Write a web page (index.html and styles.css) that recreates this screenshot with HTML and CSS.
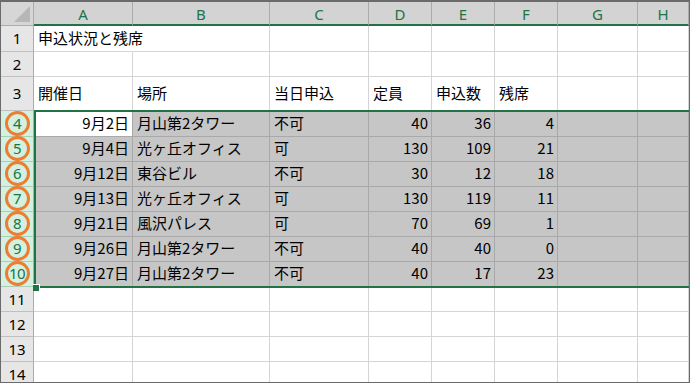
FILE: index.html
```html
<!DOCTYPE html>
<html lang="ja">
  <head>
    <meta charset="UTF-8" />
    <title>申込状況と残席</title>
    <link rel="stylesheet" href="styles.css">
  </head>
  <body>
    <div class="sheet">
      <div class="grid">
        <!-- 列見出し -->
        <div class="corner"><span class="tri"></span></div>
        <div class="hd">A</div><div class="hd">B</div><div class="hd">C</div><div class="hd">D</div>
        <div class="hd">E</div><div class="hd">F</div><div class="hd">G</div><div class="hd">H</div>

        <!-- 1〜3行目 -->
        <div class="rh">1</div>
        <div class="c spill">申込状況と残席</div><div class="c"></div><div class="c"></div><div class="c"></div>
        <div class="c"></div><div class="c"></div><div class="c"></div><div class="c"></div>

        <div class="rh">2</div>
        <div class="c"></div><div class="c"></div><div class="c"></div><div class="c"></div>
        <div class="c"></div><div class="c"></div><div class="c"></div><div class="c"></div>

        <div class="rh">3</div>
        <div class="c">開催日</div><div class="c">場所</div><div class="c">当日申込</div><div class="c">定員</div>
        <div class="c">申込数</div><div class="c">残席</div><div class="c"></div><div class="c"></div>

        <!-- 選択範囲 4〜10行目 -->
        <div class="rh on"><span class="ring">4</span></div>
        <div class="c num active">9月2日</div><div class="c sel">月山第2タワー</div><div class="c sel">不可</div><div class="c sel num">40</div>
        <div class="c sel num">36</div><div class="c sel num">4</div><div class="c sel"></div><div class="c sel"></div>

        <div class="rh on"><span class="ring">5</span></div>
        <div class="c sel num">9月4日</div><div class="c sel">光ヶ丘オフィス</div><div class="c sel">可</div><div class="c sel num">130</div>
        <div class="c sel num">109</div><div class="c sel num">21</div><div class="c sel"></div><div class="c sel"></div>

        <div class="rh on"><span class="ring">6</span></div>
        <div class="c sel num">9月12日</div><div class="c sel">東谷ビル</div><div class="c sel">不可</div><div class="c sel num">30</div>
        <div class="c sel num">12</div><div class="c sel num">18</div><div class="c sel"></div><div class="c sel"></div>

        <div class="rh on"><span class="ring">7</span></div>
        <div class="c sel num">9月13日</div><div class="c sel">光ヶ丘オフィス</div><div class="c sel">可</div><div class="c sel num">130</div>
        <div class="c sel num">119</div><div class="c sel num">11</div><div class="c sel"></div><div class="c sel"></div>

        <div class="rh on"><span class="ring">8</span></div>
        <div class="c sel num">9月21日</div><div class="c sel">風沢パレス</div><div class="c sel">可</div><div class="c sel num">70</div>
        <div class="c sel num">69</div><div class="c sel num">1</div><div class="c sel"></div><div class="c sel"></div>

        <div class="rh on"><span class="ring">9</span></div>
        <div class="c sel num">9月26日</div><div class="c sel">月山第2タワー</div><div class="c sel">不可</div><div class="c sel num">40</div>
        <div class="c sel num">40</div><div class="c sel num">0</div><div class="c sel"></div><div class="c sel"></div>

        <div class="rh on"><span class="ring">10</span></div>
        <div class="c sel num">9月27日</div><div class="c sel">月山第2タワー</div><div class="c sel">不可</div><div class="c sel num">40</div>
        <div class="c sel num">17</div><div class="c sel num">23</div><div class="c sel"></div><div class="c sel"></div>

        <!-- 11〜14行目 -->
        <div class="rh">11</div>
        <div class="c"></div><div class="c"></div><div class="c"></div><div class="c"></div>
        <div class="c"></div><div class="c"></div><div class="c"></div><div class="c"></div>

        <div class="rh">12</div>
        <div class="c"></div><div class="c"></div><div class="c"></div><div class="c"></div>
        <div class="c"></div><div class="c"></div><div class="c"></div><div class="c"></div>

        <div class="rh">13</div>
        <div class="c"></div><div class="c"></div><div class="c"></div><div class="c"></div>
        <div class="c"></div><div class="c"></div><div class="c"></div><div class="c"></div>

        <div class="rh">14</div>
        <div class="c"></div><div class="c"></div><div class="c"></div><div class="c"></div>
        <div class="c"></div><div class="c"></div><div class="c"></div><div class="c"></div>
      </div>

      <!-- 選択枠とフィルハンドル -->
      <div class="selection"><span class="handle"></span></div>
    </div>
  </body>
</html>
```

FILE: styles.css
```css
body {
  margin: 0;
  background: #ffffff;
  font-family: "Noto Sans CJK JP", "Noto Sans", sans-serif;
  font-size: 15px;
  color: #000000;
}

/* シート全体の枠 */
.sheet {
  position: relative;
  width: 690px;
  height: 383px;
  box-sizing: border-box;
  border: 1px solid #6b6b6b;
  border-top-width: 2px;
  overflow: hidden;
}

.grid {
  display: grid;
  grid-template-columns: 33px 99px 137px 99px 63px 63px 63px 80px 51px;
  grid-template-rows: 24px 26px 25px 34px 26px repeat(10, 25px);
}

/* 普通のセル */
.c {
  display: flex;
  align-items: center;
  box-sizing: border-box;
  padding: 0 4px 2px 4px;
  border-right: 1px solid #d4d4d4;
  border-bottom: 1px solid #d4d4d4;
  white-space: nowrap;
  overflow: hidden;
  line-height: 18px;
}

/* 隣の空セルにはみ出す文字 */
.c.spill {
  overflow: visible;
  border-right-color: transparent;
}

.num {
  justify-content: flex-end;
  padding-right: 3px;
}

/* 選択範囲のセル */
.sel {
  background: #c6c6c6;
  border-right-color: #a9a9a9;
  border-bottom-color: #a9a9a9;
}

.active {
  background: #ffffff;
  border-right-color: #a9a9a9;
  border-bottom-color: #a9a9a9;
}

/* 左上の角 */
.corner {
  display: flex;
  justify-content: flex-end;
  align-items: flex-end;
  box-sizing: border-box;
  padding: 0 3px 3px 0;
  background: #d6d6d6;
  border-right: 1px solid #ababab;
  border-bottom: 1px solid #ababab;
}

.tri {
  width: 16px;
  height: 16px;
  background: #b7b7b7;
  clip-path: polygon(100% 0, 100% 100%, 0 100%);
}

/* 列見出し */
.hd {
  display: flex;
  align-items: center;
  justify-content: center;
  box-sizing: border-box;
  padding-top: 1px;
  background: #d3d3d3;
  color: #217346;
  font-family: "Noto Sans", sans-serif;
  font-size: 15px;
  border-right: 1px solid #ababab;
  border-bottom: 2px solid #217346;
}

/* 行見出し */
.rh {
  display: flex;
  align-items: center;
  justify-content: center;
  box-sizing: border-box;
  padding-bottom: 1px;
  background: #e6e6e6;
  font-family: "Noto Sans", sans-serif;
  font-size: 15px;
  border-right: 1px solid #ababab;
  border-bottom: 1px solid #c0c0c0;
}

.rh.on {
  background: #d3f0e0;
  color: #217346;
  border-bottom-color: #a9cdb8;
}

/* オレンジの丸 */
.ring {
  display: flex;
  align-items: center;
  justify-content: center;
  width: 25px;
  height: 25px;
  box-sizing: border-box;
  border: 3px solid #ed7d31;
  border-radius: 50%;
  letter-spacing: -0.5px;
  line-height: 1;
}

/* 選択枠 */
.selection {
  position: absolute;
  left: 33px;
  top: 108px;
  width: 700px;
  height: 178px;
  box-sizing: border-box;
  border: 2px solid #217346;
}

.handle {
  position: absolute;
  left: -3px;
  bottom: -5px;
  width: 6px;
  height: 6px;
  background: #217346;
  border: 1px solid #ffffff;
  border-left: none;
  border-bottom: none;
}
```
